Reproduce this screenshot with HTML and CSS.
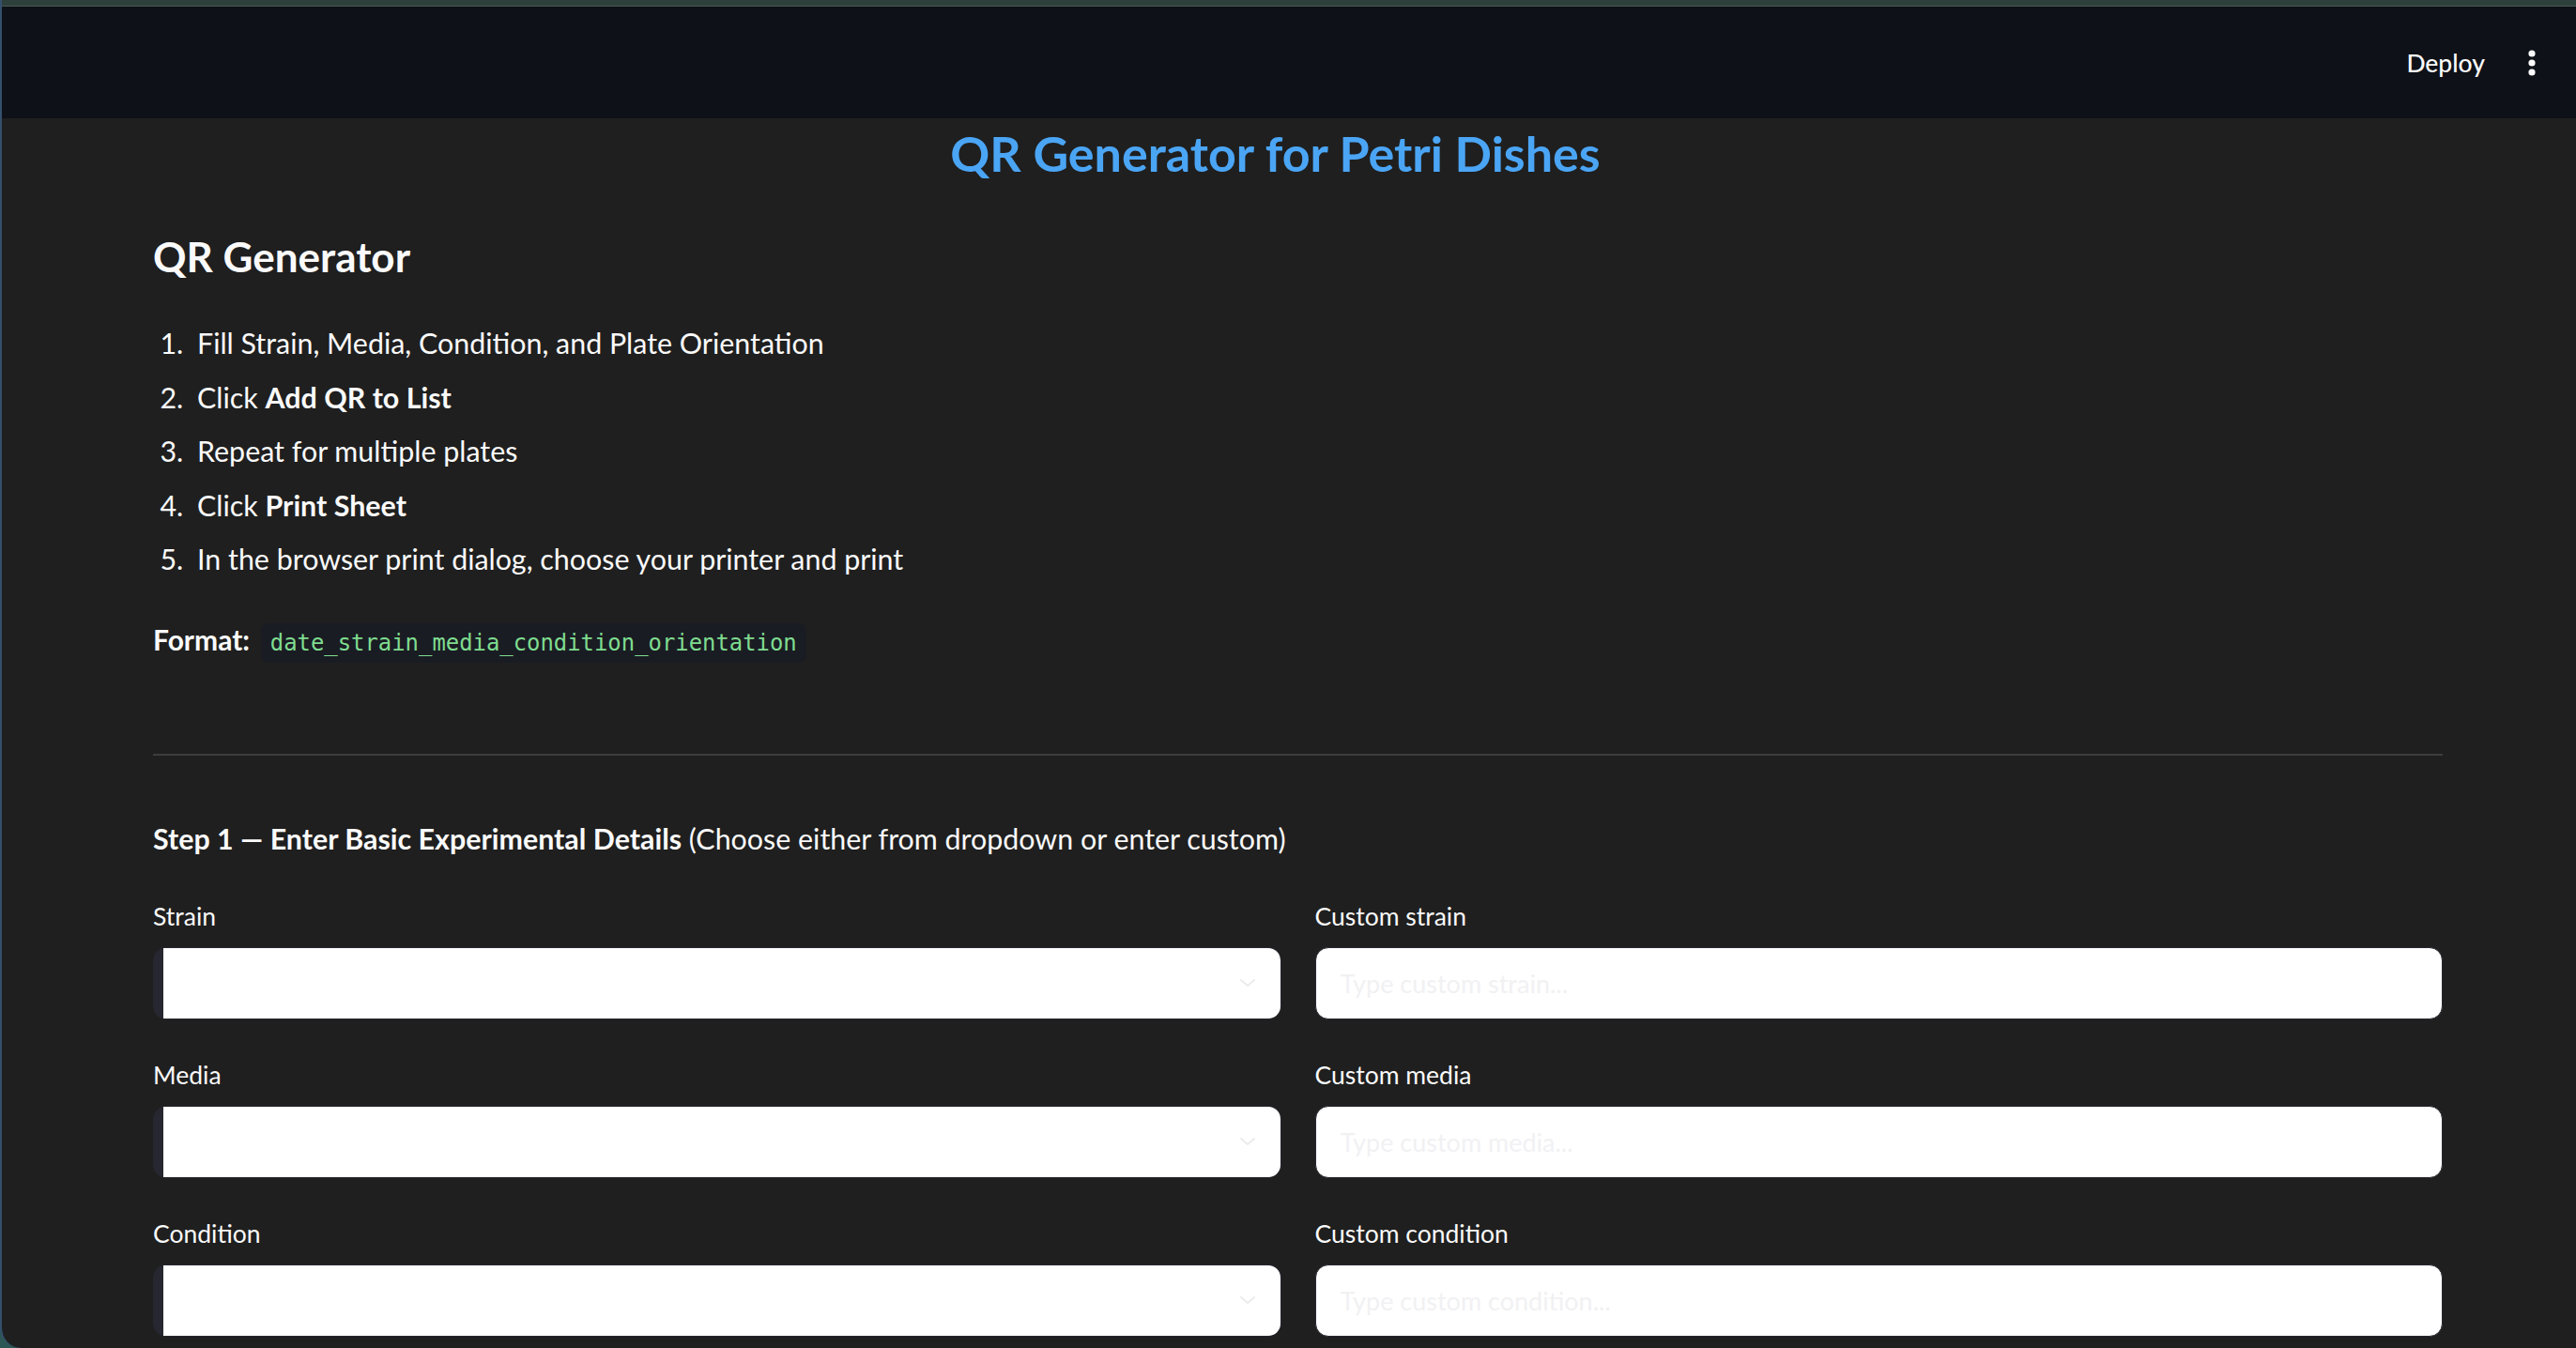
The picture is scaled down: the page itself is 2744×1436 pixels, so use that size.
FILE: index.html
```html
<!DOCTYPE html>
<html lang="en">
<head>
    <meta charset="UTF-8">
    <meta name="viewport" content="width=device-width, initial-scale=1.0">
    <title>QR Generator for Petri Dishes</title>
    <link rel="stylesheet" href="styles.css">
</head>
<body>
    <div class="app">
        <div class="window-bar"></div>
        <header class="toolbar">
            <span class="deploy">Deploy</span>
            <span class="kebab" aria-label="menu">
                <svg width="10" height="30" viewBox="0 0 10 30">
                    <circle cx="5" cy="5" r="3.6" fill="#fafafa"/>
                    <circle cx="5" cy="15" r="3.6" fill="#fafafa"/>
                    <circle cx="5" cy="25" r="3.6" fill="#fafafa"/>
                </svg>
            </span>
        </header>

        <main class="content">
            <h1 class="title">QR Generator for Petri Dishes</h1>

            <h3 class="section-title">QR Generator</h3>
            <ol class="steps">
                <li>Fill Strain, Media, Condition, and Plate Orientation</li>
                <li>Click <strong>Add QR to List</strong></li>
                <li>Repeat for multiple plates</li>
                <li>Click <strong>Print Sheet</strong></li>
                <li>In the browser print dialog, choose your printer and print</li>
            </ol>
            <p class="format"><strong>Format:</strong> <code>date_strain_media_condition_orientation</code></p>

            <hr class="divider">

            <p class="step-head"><strong>Step 1 — Enter Basic Experimental Details</strong> (Choose either from dropdown or enter custom)</p>

            <div class="form-grid">
                <div class="field">
                    <label>Strain</label>
                    <div class="select">
                        <div class="select-box">
                            <svg class="chevron" width="18" height="10" viewBox="0 0 18 10"><path d="M2 2l7 6 7-6" fill="none" stroke="#ececee" stroke-width="2" stroke-linecap="round" stroke-linejoin="round"/></svg>
                        </div>
                    </div>
                </div>
                <div class="field">
                    <label>Custom strain</label>
                    <input class="text-input" type="text" placeholder="Type custom strain...">
                </div>

                <div class="field">
                    <label>Media</label>
                    <div class="select">
                        <div class="select-box">
                            <svg class="chevron" width="18" height="10" viewBox="0 0 18 10"><path d="M2 2l7 6 7-6" fill="none" stroke="#ececee" stroke-width="2" stroke-linecap="round" stroke-linejoin="round"/></svg>
                        </div>
                    </div>
                </div>
                <div class="field">
                    <label>Custom media</label>
                    <input class="text-input" type="text" placeholder="Type custom media...">
                </div>

                <div class="field">
                    <label>Condition</label>
                    <div class="select">
                        <div class="select-box">
                            <svg class="chevron" width="18" height="10" viewBox="0 0 18 10"><path d="M2 2l7 6 7-6" fill="none" stroke="#ececee" stroke-width="2" stroke-linecap="round" stroke-linejoin="round"/></svg>
                        </div>
                    </div>
                </div>
                <div class="field">
                    <label>Custom condition</label>
                    <input class="text-input" type="text" placeholder="Type custom condition...">
                </div>
            </div>
        </main>
    </div>
</body>
</html>
```

FILE: styles.css
```css
/* base */
html, body {
    margin: 0;
    padding: 0;
    height: 100%;
    overflow: hidden;
    background-color: #2c5754;
    font-family: Lato, "Noto Sans", sans-serif;
    color: #fafafa;
}

.app {
    height: 100%;
    background-color: #1f1f1f;
    border-left: 2px solid #34506c;
    border-bottom-left-radius: 22px;
    overflow: hidden;
}

.window-bar {
    height: 6px;
    background-color: #2e403b;
    border-bottom: 1px solid #4b5853;
}

/* header */
.toolbar {
    height: 119px;
    background-color: #0e1117;
    display: flex;
    justify-content: flex-end;
    align-items: center;
    padding-right: 42px;
    box-sizing: border-box;
}

.deploy {
    font-size: 26.5px;
    font-weight: 500;
    margin-right: 45px;
}

.kebab {
    display: flex;
}

/* main */
.content {
    padding: 0 142px 0 161px;
}

.title {
    margin: 0;
    height: 74px;
    line-height: 74px;
    text-align: center;
    font-size: 52px;
    font-weight: 700;
    color: #4ba5f5;
    padding-right: 48px;
}

.section-title {
    margin: 40px 0 0;
    line-height: 66px;
    font-size: 44px;
    font-weight: 700;
}

.steps {
    margin: 31px 0 0;
    padding-left: 40px;
    font-size: 30.4px;
}

.steps li {
    line-height: 57.6px;
    padding-left: 7px;
}

.steps strong,
.format strong,
.step-head strong {
    font-weight: 700;
}

.format {
    margin: 27px 0 0;
    line-height: 58px;
    font-size: 30px;
}

.format code {
    font-family: "DejaVu Sans Mono", "Liberation Mono", monospace;
    font-size: 23.9px;
    color: #7fdc90;
    background-color: #1a1c23;
    padding: 7px 10px;
    border-radius: 8px;
    margin-left: 4px;
}

.divider {
    margin: 89px 0 0;
    border: 0;
    height: 2px;
    background-color: #3d3d3d;
}

.step-head {
    margin: 59px 0 0;
    line-height: 58px;
    font-size: 30.4px;
}

/* form */
.form-grid {
    display: grid;
    grid-template-columns: 1fr 1fr;
    column-gap: 36px;
    row-gap: 41px;
    margin-top: 36px;
}

.field label {
    display: block;
    height: 36px;
    line-height: 36px;
    font-size: 26.5px;
    margin-bottom: 15px;
}

.select {
    height: 77px;
    background-color: #262730;
    border-radius: 14px;
    padding-left: 10px;
    box-sizing: border-box;
    border: 1px solid #26272f;
}

.select-box {
    height: 100%;
    background-color: #ffffff;
    border-radius: 0 13px 13px 0;
    display: flex;
    justify-content: flex-end;
    align-items: center;
    padding-right: 26px;
}

.text-input {
    display: block;
    width: 100%;
    height: 77px;
    box-sizing: border-box;
    border: 1px solid #26272f;
    border-radius: 14px;
    background-color: #ffffff;
    padding: 0 26px;
    font-family: Lato, "Noto Sans", sans-serif;
    font-size: 27px;
    outline: none;
}

.text-input::placeholder {
    color: #f1f1f3;
}
```
